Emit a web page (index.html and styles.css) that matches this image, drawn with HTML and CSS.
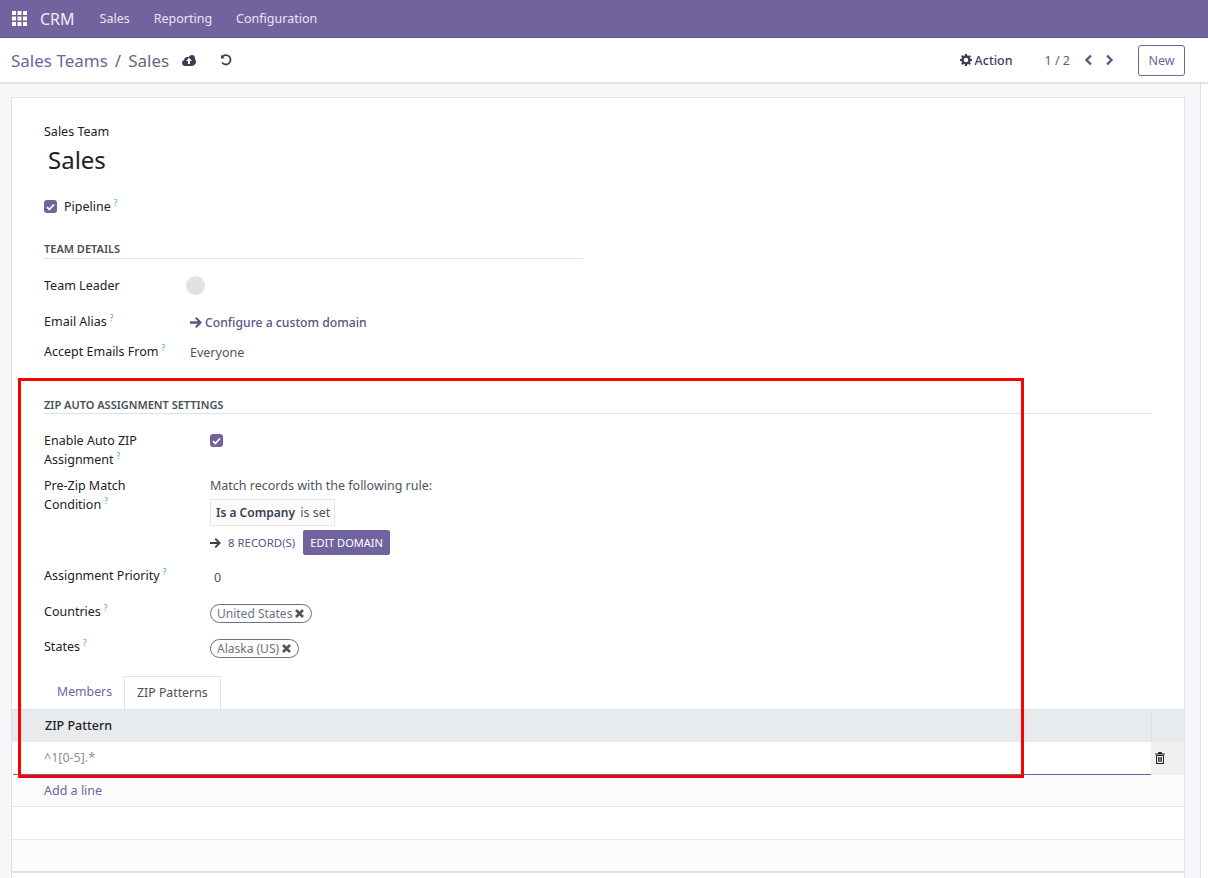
FILE: index.html
```html
<!DOCTYPE html>
<html lang="en">
<head>
  <meta charset="UTF-8">
  <title>Sales Teams / Sales</title>
  <link rel="stylesheet" href="styles.css">
</head>
<body>
  <!-- Top bar -->
  <nav class="navbar">
    <svg class="apps-icon" width="15" height="15" viewBox="0 0 15 15" fill="#fff">
      <rect x="0" y="0" width="4" height="4"/><rect x="5.5" y="0" width="4" height="4"/><rect x="11" y="0" width="4" height="4"/>
      <rect x="0" y="5.5" width="4" height="4"/><rect x="5.5" y="5.5" width="4" height="4"/><rect x="11" y="5.5" width="4" height="4"/>
      <rect x="0" y="11" width="4" height="4"/><rect x="5.5" y="11" width="4" height="4"/><rect x="11" y="11" width="4" height="4"/>
    </svg>
    <span class="brand">CRM</span>
    <a class="nav-link">Sales</a>
    <a class="nav-link">Reporting</a>
    <a class="nav-link">Configuration</a>
  </nav>

  <!-- Breadcrumb and actions -->
  <header class="control-panel">
    <div class="breadcrumb"><span class="crumb-link">Sales Teams</span><span class="crumb-sep">/</span><span class="crumb-current">Sales</span></div>
    <svg class="save-icon" width="14" height="11" viewBox="0 0 14 11">
      <path fill="#374151" d="M3.2 11C1.4 11 0 9.6 0 7.9c0-1.4.9-2.5 2.1-2.9C2.3 3.3 3.7 2 5.4 2c.5 0 .9.1 1.3.3C7.4.9 8.700 0 10 0c1.700 0 3 1.300 3 3 0 .4-.1.8-.2 1.100C13.600 4.700 14 5.700 14 6.800 14 9.100 12.200 11 10 11z"/>
      <path fill="#fff" d="M7 2.800 10 6H8v3H6V6H4z"/>
    </svg>
    <svg class="undo-icon" width="12" height="12" viewBox="0 0 12 12" fill="none" stroke="#374151" stroke-width="1.800">
      <path d="M2.200 2.800A4.700 4.700 0 1 1 2 8.500"/>
      <path d="M1 .8v3.600h3.600z" fill="#374151" stroke="none"/>
    </svg>
    <div class="panel-right">
      <svg class="gear-icon" width="12" height="12" viewBox="0 0 12 12">
        <circle cx="6" cy="6" r="3.500" fill="none" stroke="#374151" stroke-width="2.400"/>
        <path stroke="#374151" stroke-width="2" d="M6 0v2M6 10v2M0 6h2M10 6h2M1.800 1.800l1.400 1.400M8.800 8.800l1.400 1.400M1.800 10.200l1.400-1.400M8.800 3.200l1.400-1.400"/>
      </svg>
      <span class="action-label">Action</span>
      <span class="pager">1 / 2</span>
      <svg class="pager-arrow" width="9" height="12" viewBox="0 0 9 12" fill="none" stroke="#5f5287" stroke-width="2.400"><path d="M7 1.500 2.500 6 7 10.500"/></svg>
      <svg class="pager-arrow next" width="9" height="12" viewBox="0 0 9 12" fill="none" stroke="#5f5287" stroke-width="2.400"><path d="M2 1.500 6.500 6 2 10.500"/></svg>
      <button class="btn-new">New</button>
    </div>
  </header>

  <div class="content">
    <main class="sheet">
      <div class="sheet-head">
        <div class="name-label">Sales Team</div>
        <div class="name-value">Sales</div>
        <div class="pipeline">
          <span class="check"><svg width="9" height="8" viewBox="0 0 9 8" fill="none" stroke="#fff" stroke-width="1.800"><path d="M1 4.200 3.400 6.500 8 1.500"/></svg></span>
          <span class="label">Pipeline<sup>?</sup></span>
        </div>
      </div>

      <section class="group group-details">
        <h2 class="group-title">TEAM DETAILS</h2>
        <div class="row row-leader">
          <span class="label">Team Leader</span>
          <span class="avatar"></span>
        </div>
        <div class="row row-alias">
          <span class="label">Email Alias<sup>?</sup></span>
          <a class="alias-link">
            <svg width="12" height="11" viewBox="0 0 12 11" fill="#5f5287"><path d="M6.500 0 12 5.500 6.500 11 5 9.500 7.900 6.700H0V4.300h7.900L5 1.500z"/></svg>
            Configure a custom domain
          </a>
        </div>
        <div class="row row-accept">
          <span class="label">Accept Emails From<sup>?</sup></span>
          <span class="value everyone">Everyone</span>
        </div>
      </section>

      <section class="group group-zip">
        <h2 class="group-title">ZIP AUTO ASSIGNMENT SETTINGS</h2>
        <div class="zip-row zip-enable">
          <span class="label">Enable Auto ZIP<br>Assignment<sup>?</sup></span>
          <span class="check"><svg width="9" height="8" viewBox="0 0 9 8" fill="none" stroke="#fff" stroke-width="1.800"><path d="M1 4.200 3.400 6.500 8 1.500"/></svg></span>
        </div>
        <div class="zip-row zip-domain">
          <span class="label">Pre-Zip Match<br>Condition<sup>?</sup></span>
          <div class="domain">
            <div class="value">Match records with the following rule:</div>
            <div class="domain-rule"><b>Is a Company</b> is set</div>
            <div class="domain-actions">
              <svg width="11" height="10" viewBox="0 0 12 11" fill="#374151"><path d="M6.500 0 12 5.500 6.500 11 5 9.500 7.900 6.700H0V4.300h7.900L5 1.500z"/></svg>
              <a class="records-link">8 RECORD(S)</a>
              <button class="btn-domain">EDIT DOMAIN</button>
            </div>
          </div>
        </div>
        <div class="zip-row zip-priority">
          <span class="label">Assignment Priority<sup>?</sup></span>
          <span class="value priority">0</span>
        </div>
        <div class="zip-row zip-countries">
          <span class="label">Countries<sup>?</sup></span>
          <span class="tag">United States <svg class="tag-x" width="9" height="9" viewBox="0 0 9 9" stroke="#555" stroke-width="2.600"><path d="M1 1l7 7M8 1 1 8"/></svg></span>
        </div>
        <div class="zip-row zip-states">
          <span class="label">States<sup>?</sup></span>
          <span class="tag">Alaska (US) <svg class="tag-x" width="9" height="9" viewBox="0 0 9 9" stroke="#555" stroke-width="2.600"><path d="M1 1l7 7M8 1 1 8"/></svg></span>
        </div>
      </section>

      <div class="tabs">
        <a class="tab">Members</a>
        <a class="tab active">ZIP Patterns</a>
      </div>

      <div class="list">
        <div class="list-head">
          <div class="cell-main">ZIP Pattern</div>
          <div class="cell-trash"></div>
        </div>
        <div class="list-edit">
          <div class="cell-main pattern">^1[0-5].*</div>
          <div class="cell-trash">
            <svg width="10" height="12" viewBox="0 0 10 12"><path fill="#222" d="M3.500 0h3l.7 1.500H10v1H0v-1h2.800zM1 3h8v9H1zm1 1v7h6V4z"/><path stroke="#222" d="M3.700 5v5M5 5v5M6.300 5v5"/></svg>
          </div>
        </div>
        <div class="list-row odd"><a class="add-line">Add a line</a></div>
        <div class="list-row even"></div>
        <div class="list-row odd last"></div>
      </div>
    </main>
    <div class="scroll-gutter"></div>
  </div>

  <!-- Annotation from the screenshot -->
  <div class="highlight"></div>
</body>
</html>
```

FILE: styles.css
```css
* {
  box-sizing: border-box;
}

html, body {
  height: 878px;
  overflow: hidden;
}

body {
  margin: 0;
  font-family: "Noto Sans", Arial, sans-serif;
  font-size: 12.5px;
  color: #374151;
  background-color: #fff;
}

.navbar {
  display: flex;
  align-items: center;
  height: 38px;
  padding-left: 12px;
  background-color: #71639e;
  border-bottom: 1px solid #5f5287;
  color: #fff;
}

.brand {
  margin-left: 13px;
  margin-right: 25px;
  font-size: 16px;
  color: #eee;
}

.nav-link {
  margin-right: 24px;
  color: #e8e6ef;
}

.control-panel {
  display: flex;
  align-items: center;
  height: 46px;
  padding: 0 23px 0 11px;
  border-bottom: 2px solid #dee2e6;
}

.breadcrumb {
  font-size: 17px;
  color: #71639e;
}

.crumb-sep {
  margin: 0 7px;
}

.crumb-sep,
.crumb-current {
  color: #5f6b7a;
}

.save-icon {
  margin-left: 13px;
}

.undo-icon {
  margin-left: 24px;
}

.panel-right {
  display: flex;
  align-items: center;
  margin-left: auto;
}

.action-label {
  margin-left: 3px;
  font-weight: 500;
}

.pager {
  margin-left: 32px;
  color: #5f6368;
}

.pager-arrow {
  margin-left: 14px;
}

.pager-arrow.next {
  margin-left: 12px;
}

.btn-new {
  width: 47px;
  height: 31px;
  margin-left: 24px;
  padding: 0;
  font: inherit;
  color: #71639e;
  background-color: #fff;
  border: 1px solid #71639e;
  border-radius: 3px;
}

.content {
  display: flex;
  height: 794px;
  margin-right: 7px;
  background-color: #f6f7f9;
}

.sheet {
  flex: none;
  width: 1174px;
  height: 790px;
  margin: 13px 0 0 11px;
  background-color: #fff;
  border: 1px solid #dee2e6;
}

.scroll-gutter {
  flex: none;
  width: 16px;
  border-right: 1px solid #dee2e6;
}

.sheet-head {
  padding: 25px 0 0 32px;
}

.name-label {
  color: #222;
  line-height: 18px;
}

.name-value {
  margin: 3px 0 0 4px;
  font-size: 24px;
  line-height: 32px;
  color: #222;
}

.pipeline {
  display: flex;
  align-items: center;
  gap: 7px;
  margin-top: 21px;
  line-height: 18px;
}

.check {
  display: flex;
  align-items: center;
  justify-content: center;
  width: 13px;
  height: 13px;
  background-color: #71639e;
  border-radius: 3px;
}

.label {
  color: #222;
  line-height: 19px;
  white-space: nowrap;
}

sup {
  margin-left: 3px;
  font-size: 8px;
  line-height: 1;
  vertical-align: 5px;
  color: #2ea3c9;
}

.group {
  padding-left: 32px;
}

.group-title {
  margin: 0;
  font-size: 11px;
  font-weight: 600;
  line-height: 14px;
  color: #495057;
  border-bottom: 1px solid #dee2e6;
}

.group-details {
  width: 571px;
  margin-top: 26px;
}

.group-details .group-title {
  padding-bottom: 2px;
}

.row {
  display: flex;
  align-items: center;
}

.row .label {
  flex: none;
  width: 146px;
}

.row-leader {
  margin-top: 17px;
}

.avatar {
  width: 19px;
  height: 19px;
  margin-left: -4px;
  background-color: #e2e2e2;
  border-radius: 50%;
}

.row-alias {
  margin-top: 17px;
}

.alias-link {
  display: flex;
  align-items: center;
  gap: 3px;
  padding-top: 2px;
  font-size: 12.200px;
  color: #5f5287;
  font-weight: 500;
}

.row-accept {
  margin-top: 11px;
}

.value {
  color: #4b5563;
}

.everyone {
  padding-top: 2px;
}

.group-zip {
  margin-top: 37px;
  margin-right: 32px;
}

.group-zip .group-title {
  padding-bottom: 1px;
}

.zip-row {
  display: flex;
  align-items: flex-start;
}

.zip-row > .label {
  flex: none;
  width: 166px;
}

.zip-enable {
  margin-top: 17px;
}

.zip-enable .check {
  margin-top: 3px;
}

.zip-domain {
  margin-top: 7px;
}

.domain {
  padding-top: 1px;
}

.domain-rule {
  width: fit-content;
  height: 27px;
  margin-top: 5px;
  padding: 0 4px 0 5px;
  line-height: 25px;
  color: #4b5563;
  background-color: #fbfbfc;
  border: 1px solid #e4e7ea;
}

.domain-rule b {
  margin-right: 2px;
  font-size: 12px;
  font-weight: 600;
  color: #374151;
}

.domain-actions {
  display: flex;
  align-items: center;
  margin-top: 4px;
}

.records-link {
  margin-left: 7px;
  font-size: 11.400px;
  color: #5f5287;
}

.btn-domain {
  height: 25px;
  margin-left: 8px;
  padding: 0 7px;
  font: inherit;
  font-size: 11px;
  color: #fff;
  background-color: #71639e;
  border: none;
  border-radius: 2px;
}

.zip-priority {
  margin-top: 11px;
}

.priority {
  margin: 3px 0 0 4px;
}

.zip-countries {
  margin-top: 16px;
}

.zip-states {
  margin-top: 14px;
}

.tag {
  display: inline-flex;
  align-items: center;
  height: 19px;
  margin-top: 2px;
  padding: 0 7px 0 6px;
  color: #6b7280;
  font-size: 12px;
  border: 1px solid #6b7280;
  border-radius: 10px;
}

.tag-x {
  margin-left: 3px;
}

.tabs {
  display: flex;
  align-items: flex-end;
  height: 33px;
  margin-top: 18px;
  padding-left: 33px;
}

.tab {
  display: block;
  height: 33px;
  padding: 0 12px;
  font-size: 12.300px;
  line-height: 32px;
  color: #71639e;
}

.tab.active {
  color: #495057;
  background-color: #fff;
  border: 1px solid #dee2e6;
  border-bottom: none;
  border-radius: 2px 2px 0 0;
}

.list-head {
  display: flex;
  height: 33px;
  background-color: #e8ebee;
  border-top: 1px solid #dee2e6;
  color: #222;
  line-height: 31px;
  font-weight: 500;
}

.cell-main {
  flex: 1;
  padding-left: 33px;
}

.cell-trash {
  flex: none;
  width: 33px;
  border-left: 1px solid #dee2e6;
}

.list-edit {
  display: flex;
  height: 33px;
  margin-left: 1px;
  line-height: 31px;
}

.pattern {
  padding-left: 31px;
  color: #8a9099;
  border-bottom: 1px solid #71639e;
}

.list-edit .cell-trash {
  display: flex;
  align-items: center;
  padding: 0 0 2px 4px;
  border-left: none;
  background-color: #f0f0f0;
}

.list-row {
  height: 32px;
  padding-left: 32px;
  line-height: 31px;
  border-bottom: 1px solid #e7e9ed;
}

.list-row.even {
  height: 33px;
}

.list-row.odd {
  background-color: #fbfbfb;
}

.list-row.last {
  height: 33px;
  border-bottom: 2px solid #dee2e6;
}

.add-line {
  color: #71639e;
}

.highlight {
  position: absolute;
  left: 18px;
  top: 378px;
  width: 1006px;
  height: 400px;
  border: 3px solid #f00;
}
```
